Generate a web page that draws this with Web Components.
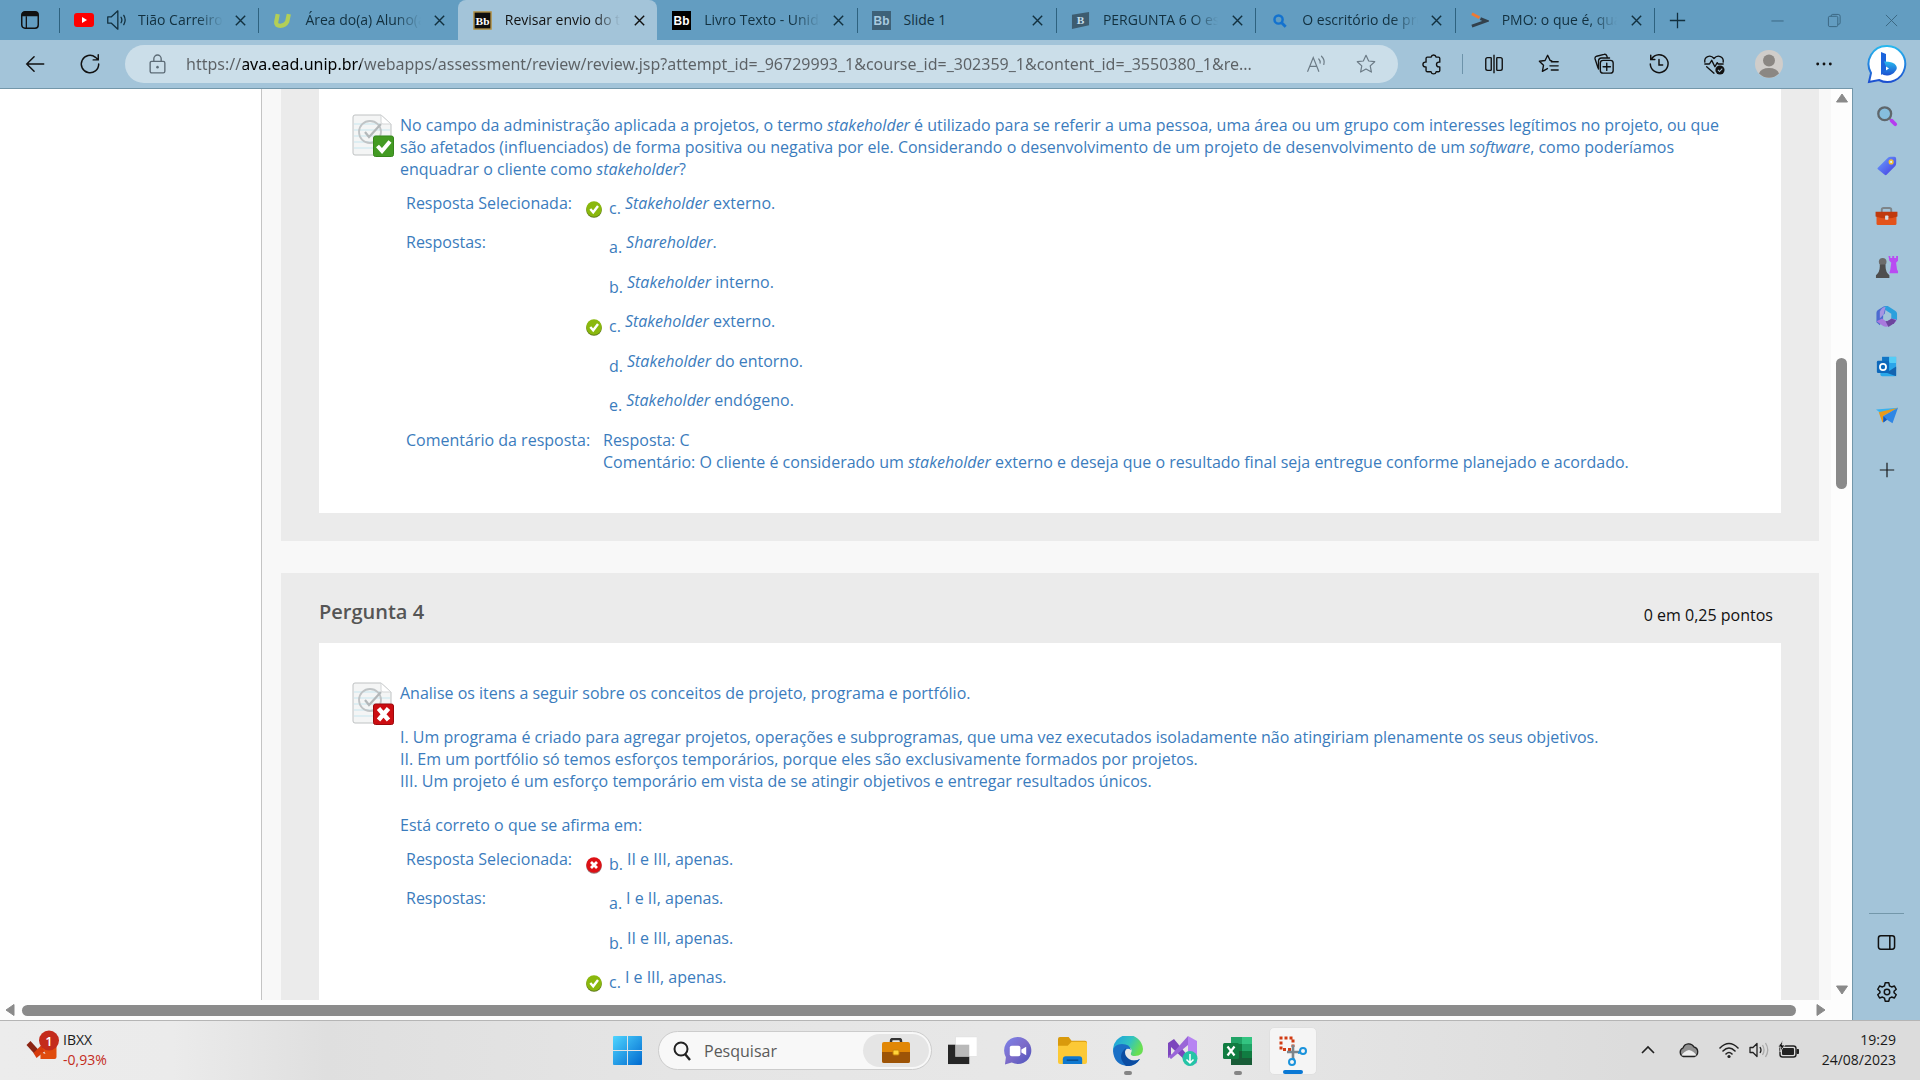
<!DOCTYPE html>
<html lang="pt-BR">
<head>
<meta charset="utf-8">
<title>Revisar envio do teste</title>
<style>
html,body{margin:0;height:100%}
body{font-family:"Open Sans","Noto Sans",sans-serif;font-size:14px;color:#1a1a1a;overflow:hidden}
</style>
</head>
<body>
<desk-top></desk-top>
<script>
const ICONS = {
workspace:['24 24','<rect x="3" y="3" width="18" height="18" rx="3.5" fill="none" stroke="#111" stroke-width="1.6"/><path d="M3 8V6a3 3 0 0 1 3-3h12a3 3 0 0 1 3 3v2z" fill="#111"/><path d="M8 8v13" stroke="#111" stroke-width="1.4"/>'],
youtube:['20 14','<rect width="20" height="14" rx="3" fill="#f00"/><path d="M8 4v6l5-3z" fill="#fff"/>'],
sound:['24 24','<g fill="none" stroke="#12303f" stroke-width="1.4" stroke-linejoin="round" stroke-linecap="round"><path d="M3 8.500h4l7-6.500v20l-7-6.500H3z"/><path d="M17.500 9q1.800 3 0 6M20.500 7q3 5 0 10"/></g>'],
unip:['18 16','<path d="M4.500 2L3 9.500Q2.500 13 7 13T13.500 9L15 2" fill="none" stroke="#b3cf57" stroke-width="4"/>'],
bbgold:['20 20','<rect x="1" y="1" width="18" height="18" fill="#0d0d0d" stroke="#b39246" stroke-width="1.500"/><text x="10" y="14.500" text-anchor="middle" font-family="Liberation Serif" font-weight="700" font-size="12" fill="#fff">Bb</text>'],
bb:['20 20','<rect width="20" height="20" fill="#000"/><text x="10" y="14.500" text-anchor="middle" font-family="Liberation Sans" font-weight="700" font-size="12.500" fill="#fff">Bb</text>'],
bbgray:['20 20','<rect width="20" height="20" fill="#3e6178"/><text x="10" y="14.500" text-anchor="middle" font-family="Liberation Sans" font-weight="700" font-size="12.500" fill="#a9cbe0">Bb</text>'],
brainly:['20 20','<path d="M1 4L19 1V15L1 19z" fill="#3d5c70"/><text x="10" y="14" text-anchor="middle" font-family="Liberation Serif" font-weight="700" font-size="12" fill="#c4deec">B</text>'],
magblue:['20 20','<circle cx="9" cy="9" r="4.300" fill="none" stroke="#1372cf" stroke-width="2.600"/><path d="M12 12l4.500 4.500" stroke="#1372cf" stroke-width="3"/>'],
pmo:['20 20','<path d="M2 3l8 4" stroke="#f07a32" stroke-width="3"/><path d="M11 8l6 2.500L2 16" fill="none" stroke="#33414c" stroke-width="3"/>'],
close:['16 16','<path d="M3 3l10 10M13 3L3 13" stroke="currentColor" stroke-width="1.500"/>'],
thinx:['16 16','<path d="M2 2l12 12M14 2L2 14" stroke="#3a6580" stroke-width="1"/>'],
plus:['20 20','<path d="M10 1v18M1 10h18" stroke="currentColor" stroke-width="1.500"/>'],
min:['16 16','<path d="M1.500 8.500h13" stroke="#3a6580"/>'],
max:['16 16','<g fill="none" stroke="#3a6580"><rect x="1.500" y="3.500" width="10" height="11" rx="1.500"/><path d="M4.500 3.500v-.5a1.500 1.500 0 0 1 1.500-1.500h6a2 2 0 0 1 2 2v7a1.500 1.500 0 0 1-1.500 1.500h-1"/></g>'],
back:['24 24','<path d="M21.500 12H3M11 4l-8 8 8 8" fill="none" stroke="#111" stroke-width="1.600" stroke-linecap="round"/>'],
reload:['24 24','<path d="M21.500 12a9.500 9.500 0 1 1-3.500-7.300l2.500 2.300M21 2V7.500H15.500" fill="none" stroke="#111" stroke-width="1.600" stroke-linecap="round"/>'],
lock:['20 20','<g fill="none" stroke="#5d6c77" stroke-width="1.300"><rect x="3" y="7" width="14" height="11" rx="1.500"/><path d="M6.500 7V4.500a3.500 3.500 0 0 1 7 0V7"/></g><circle cx="10" cy="12.500" r="1.200" fill="#5d6c77"/>'],
read:['24 24','<g fill="none" stroke="#6c7b86" stroke-width="1.300" stroke-linecap="round"><path d="M3 20L9 5l6 15M5.500 14.500h7M15 6.500q2 2 1.500 4.500M18 3.500q4 4 2.500 9"/></g>'],
star:['24 24','<path d="M12 2.500l2.900 6.200 6.600.8-4.900 4.600 1.300 6.700L12 17.500l-5.900 3.300 1.300-6.700L2.500 9.500l6.600-.8z" fill="none" stroke="#6c7b86" stroke-width="1.300" stroke-linejoin="round"/>'],
puzzle:['24 24','<path d="M7 4.500h4a2.800 2.800 0 0 1 5.500 0H19a1.500 1.500 0 0 1 1.500 1.500v4h-1a2.600 2.600 0 0 0 0 5.200h1V19a1.500 1.500 0 0 1-1.500 1.500h-2.500a2.800 2.800 0 0 1-5.500 0H7A1.500 1.500 0 0 1 5.500 19v-3.800h-.8a2.600 2.600 0 0 1 0-5.200h.8V6A1.500 1.500 0 0 1 7 4.500z" fill="none" stroke="#111" stroke-width="1.500" stroke-linejoin="round"/>'],
split:['24 24','<g fill="none" stroke="#111" stroke-width="1.500"><path d="M9 5H5a2 2 0 0 0-2 2v10a2 2 0 0 0 2 2h4M15 5h4a2 2 0 0 1 2 2v10a2 2 0 0 1-2 2h-4M12 2v20M9 5v14M15 5v14"/></g>'],
favs:['24 24','<g fill="none" stroke="#111" stroke-width="1.500" stroke-linejoin="round" stroke-linecap="round"><path d="M15 8.500L13.200 8 10.500 2.500 7.700 8.200 1.500 9l4.500 4.400L4.800 20l5.500-3"/><path d="M14.500 9.500H22M13 14h9M14.500 18.500H22"/></g>'],
collect:['24 24','<g fill="none" stroke="#111" stroke-width="1.500" stroke-linecap="round"><rect x="8" y="8" width="14" height="14" rx="3"/><path d="M15 11v8M11 15h8M5.500 16.500L2.300 6.500a2.500 2.500 0 0 1 1.700-3l8-2a2.500 2.500 0 0 1 3 1.500l.5 1.500M6 17.500V9a3.500 3.500 0 0 1 3.500-3.500H18"/></g>'],
history:['24 24','<g fill="none" stroke="#111" stroke-width="1.600" stroke-linecap="round"><path d="M4 6.500A9.700 9.700 0 1 1 2.500 12M3 2.500V7h4.500M12 7v6h4"/></g>'],
heart:['24 24','<g fill="none" stroke="#111" stroke-width="1.500" stroke-linejoin="round" stroke-linecap="round"><path d="M2 10C1 4 8 1 12 6c4-5 11-2 10 4M2 12h5l2.500-4 3.500 7 2.500-4.500 1 1.500H22M4 15l8 7"/></g><circle cx="18.500" cy="18.500" r="5" fill="#111"/><path d="M16.300 18.500l1.700 1.700 3-3.200" fill="none" stroke="#a3c4d9" stroke-width="1.200"/>'],
avatar:['28 28','<circle cx="14" cy="14" r="14" fill="#d0cdca"/><circle cx="14" cy="10.500" r="6" fill="#8b8783"/><path d="M4 23.500Q6 18 14 18t10 5.500A14 14 0 0 1 4 23.500z" fill="#8b8783"/>'],
dots:['20 20','<g fill="#111"><circle cx="3" cy="10" r="1.600"/><circle cx="10" cy="10" r="1.600"/><circle cx="17" cy="10" r="1.600"/></g>'],
bing:['40 40','<defs><linearGradient id="a" x1="0" y1="0" x2="0" y2="1"><stop stop-color="#28b8ee"/><stop offset="1" stop-color="#1c4fd0"/></linearGradient></defs><path d="M20 2A18 18 0 1 1 12 36L2 38 4 29A18 18 0 0 1 20 2z" fill="#fff" stroke="url(#a)" stroke-width="2"/><path d="M14 8l5 2v17l-5 4z" fill="#1c64dc"/><path d="M14 29.500l8-5-3-2-2-5q10 0 12 4 2 3-1 6-2 3-7 4-4 .5-7-2z" fill="url(#a)"/>'],
search3d:['24 24','<path d="M15 15l3 3" stroke="#777" stroke-width="2"/><path d="M17 17l4 4" stroke="#b53cf0" stroke-width="4" stroke-linecap="round"/><circle cx="9.500" cy="9.500" r="7" fill="#86bede" stroke="#5f676c" stroke-width="2.500"/>'],
tag:['24 24','<defs><linearGradient id="a" x2="1" y2="1"><stop stop-color="#6ba4ff"/><stop offset="1" stop-color="#4437e0"/></linearGradient></defs><path d="M2 14L13 3q1-1 3-1h4q2 0 2 2v5q0 2-1 3L11.500 21.500q-1 1-2 0L2 15.500q-1-.5 0-1.500z" fill="url(#a)"/><circle cx="16.500" cy="7.500" r="2" fill="#dcecff" stroke="#f4c02b" stroke-width="1.600"/>'],
case:['24 20','<path d="M7 6V3q0-2 2-2h6q2 0 2 2v3" fill="none" stroke="#7e8589" stroke-width="2"/><rect x="1.500" y="6" width="21" height="13" rx="1.500" fill="#e3531b"/><path d="M.5 5h23v5q-11 4-23 0z" fill="#c03a0d"/><rect x="10.500" y="9" width="3.500" height="4.500" rx=".8" fill="#d8dde0"/>'],
chess:['24 24','<path d="M14 1h2v2h2V1h2v2h2V1h2v5l-2 2 1 7 1 2v2h-9l1-4 1-7-2-2z" fill="#b94bf2"/><circle cx="8" cy="7" r="4" fill="#6c6c6c"/><path d="M5 10h6v2q0 6 4 9v3H1v-3q4-3 4-9z" fill="#4e4e4e"/>'],
m365:['24 24','<path d="M9 1.500L14 1l-3 4-2 9-4 7L1.500 18V8q0-2 2-3z" fill="#4c6bd0"/><path d="M9 2q3-2 6 0l6 4q2 1 2 3v7l-6-2V9l-5-3z" fill="#2ba0dd"/><path d="M1.500 17l6-3 4 3 5-3 6 1q0 2-2 3.500l-6 3.500q-3 1.500-6 0z" fill="#a879dd"/><path d="M11 17l6-3 5 2-2 3-6 4z" fill="#6d459e"/><path d="M5 7q2-5 6-5l-2 8-4 4z" fill="#a595e2"/><path d="M12.500 8l4 2.500v4L12.500 17l-4-2.500v-4z" fill="#a3c4d9"/>'],
outlook:['24 24','<rect x="7" y="1" width="16" height="14" fill="#2aa5ea"/><path d="M7 1h8v7H7z" fill="#1275c5"/><path d="M15 1h8v7h-8z" fill="#53cdf7"/><path d="M5 12l18 1v8q0 2-2 2H7q-2 0-2-2z" fill="#28a8ea"/><path d="M23 12L12 19l11 4z" fill="#1464b0"/><rect x="1" y="5.500" width="14" height="14" rx="1.500" fill="#0d68bb"/><circle cx="8" cy="12.500" r="3.500" fill="none" stroke="#fff" stroke-width="2"/>'],
plane:['24 24','<path d="M0 5l24-2-16 8z" fill="#37b2f0"/><path d="M3 8L24 3 8 12v6l-1 1z" fill="#e79a1b"/><path d="M8 12L24 3l-6 17-6-4-4 3z" fill="#2f86e4"/><path d="M8 12l4 4-4 3z" fill="#1759b8"/>'],
panel:['20 20','<g fill="none" stroke="#111" stroke-width="1.600"><rect x="1.500" y="3" width="17" height="14" rx="2.500"/><path d="M13.500 3v14"/></g>'],
gear:['24 24','<g fill="none" stroke="#111" stroke-width="1.600" stroke-linejoin="round"><path d="M10 2h4l.7 3.200 2.300 1.300 3.100-1 2 3.500-2.400 2.200v1.600l2.400 2.200-2 3.500-3.100-1-2.300 1.300L14 22h-4l-.7-3.200L7 17.500l-3.100 1-2-3.500 2.400-2.200v-1.600L1.900 9l2-3.500 3.100 1 2.300-1.300z"/><circle cx="12" cy="12" r="3"/></g>'],
docok:['42 44','<path d="M1 3q0-2 2-2h26l10 9v29q0 2-2 2H3q-2 0-2-2z" fill="#f4f5f5" stroke="#bfc2c3"/><path d="M29 1l10 9h-8q-2 0-2-2z" fill="#fff" stroke="#d3d5d6"/><path d="M2 10h26M2 16h36M2 22h36M2 28h36M2 34h36" stroke="#c7e6ef"/><circle cx="18" cy="18" r="11" fill="none" stroke="#c0c4c6" stroke-width="1.800"/><path d="M13 18l4 5 12-13" fill="none" stroke="#b3b8ba" stroke-width="2.200"/><rect x="21.500" y="22" width="20" height="20.500" rx="2" fill="#439b23" stroke="#36861b"/><path d="M25.500 32l4.500 5 8-9.500" fill="none" stroke="#fff" stroke-width="4"/>'],
docno:['42 44','<path d="M1 3q0-2 2-2h26l10 9v29q0 2-2 2H3q-2 0-2-2z" fill="#f4f5f5" stroke="#bfc2c3"/><path d="M29 1l10 9h-8q-2 0-2-2z" fill="#fff" stroke="#d3d5d6"/><path d="M2 10h26M2 16h36M2 22h36M2 28h36M2 34h36" stroke="#c7e6ef"/><circle cx="18" cy="18" r="11" fill="none" stroke="#c0c4c6" stroke-width="1.800"/><path d="M13 18l4 5 12-13" fill="none" stroke="#b3b8ba" stroke-width="2.200"/><rect x="21.500" y="22" width="20" height="20.500" rx="2" fill="#cc0d12" stroke="#9d080c"/><path d="M26.500 26.500l10 11.500M36.500 26.500L26.500 38" stroke="#fff" stroke-width="4.500"/>'],
ok:['16 17','<circle cx="8" cy="9" r="7.800" fill="#5f7a1c"/><circle cx="8" cy="8" r="7.700" fill="#8ab80d"/><path d="M4.300 8l2.900 3.300L12 5" fill="none" stroke="#fff" stroke-width="2.400"/>'],
no:['16 17','<circle cx="8" cy="9" r="7.800" fill="#96797a"/><circle cx="8" cy="8" r="7.700" fill="#dd1015"/><path d="M5 5l6 6M11 5l-6 6" stroke="#fff" stroke-width="2.800"/>'],
stock:['34 32','<path d="M1 15l4-4 9 10-4 4z" fill="#8c2413"/><path d="M8 23l9-9 5 5-11 9z" fill="#d63b0c"/><path d="M15 29V22l5 2-3-6 14-2v11q0 2-2 2z" fill="#e04c0d"/><circle cx="23.500" cy="10.500" r="10" fill="#c42b1c"/><text x="23.500" y="15.500" text-anchor="middle" font-family="Open Sans" font-weight="600" font-size="13" fill="#fff">1</text>'],
windows:['30 30','<defs><linearGradient id="a" x2="1" y2="1"><stop stop-color="#4fd5ff"/><stop offset="1" stop-color="#0069cf"/></linearGradient></defs><path d="M0 1q0-1 1-1h13.500v14.500H0zM15.500 0H29q1 0 1 1v13.500H15.500zM0 15.500h14.500V30H1q-1 0-1-1zM15.500 15.500H30V29q0 1-1 1H15.500z" fill="url(#a)"/>'],
mag:['20 20','<circle cx="9" cy="8" r="6.500" fill="none" stroke="#222" stroke-width="2"/><path d="M13 13l5 6" stroke="#222" stroke-width="2.400"/>'],
goldcase:['30 26','<path d="M10 5V3q0-2 2-2h6q2 0 2 2v2" fill="none" stroke="#333" stroke-width="2.500"/><rect x="1" y="4" width="28" height="21" rx="2" fill="#e18706"/><path d="M1 14h28v9q0 2-2 2H3q-2 0-2-2z" fill="#9d5407"/><rect x="12" y="12" width="6" height="5" rx="1" fill="#ffd43a" stroke="#c98309"/>'],
taskview:['30 30','<rect x="0" y="9" width="22" height="20" fill="#262626"/><rect x="8" y="1" width="22" height="20" fill="#fff" stroke="#ddd" stroke-width=".5"/><path d="M8 9h14v12H8z" fill="#b9b9b9"/>'],
chat:['30 30','<defs><linearGradient id="a" x2="1" y2="1"><stop stop-color="#7b83eb"/><stop offset=".5" stop-color="#7d6cc9"/><stop offset="1" stop-color="#4b53bc"/></linearGradient></defs><path d="M15 1a14 14 0 1 1-6 26.500L2 29.500 3 22A14 14 0 0 1 15 1z" fill="url(#a)"/><rect x="7" y="10" width="11" height="11" rx="2" fill="#fff"/><path d="M19 14l5-3v9l-5-3z" fill="#fff"/>'],
folder:['32 30','<path d="M1 3q0-2 2-2h9l3 4h14q2 0 2 2v8H1z" fill="#d99a0c"/><path d="M1 10h10l4-4h14q2 0 2 2v19q0 2-2 2H3q-2 0-2-2z" fill="#fcc936"/><path d="M6 29v-5q0-3 3-3h14q3 0 3 3v5z" fill="#0f78cf"/><path d="M10 25h12" stroke="#0a4c8c" stroke-width="1.500"/>'],
edge:['30 30','<defs><linearGradient id="a" x2="1" y2=".4"><stop stop-color="#1b9de2"/><stop offset=".6" stop-color="#32c3c0"/><stop offset="1" stop-color="#69df52"/></linearGradient></defs><path d="M0 15A15 15 0 0 1 30 13q0 7-8 7-5 0-4-3 2-4-2-6-7-3-16 4z" fill="url(#a)"/><path d="M0 15Q1 8 9 8q8 0 9 6-4-3-6 1-2 5 4 9 6 2 11-1Q23 30 15 30 1 29 0 15z" fill="#1b70c6"/><path d="M13 12Q3 20 13 30 21 31 27 23q-6 3-11 0-6-4-3-11z" fill="#0c4da2"/>'],
vs:['30 30','<path d="M0 7l6-4 14 17v7L3 11v9L0 22z" fill="#7c46bd"/><path d="M0 20l3 3L20 9V0L4 18z" fill="#9a66d8"/><path d="M20 0l9 5v22l-9 3z" fill="#b783f2"/><circle cx="22" cy="22.500" r="7.500" fill="#25c4a6"/><path d="M22 18v9M18.500 23.500L22 27l3.500-3.500" fill="none" stroke="#fff" stroke-width="1.500"/>'],
excel:['30 30','<path d="M8 1h21v28H8z" fill="#21a366"/><path d="M19 1h10v7H19z" fill="#33c481"/><path d="M8 8h11v7H8zM19 15h10v7H19z" fill="#107c41"/><path d="M8 15h11v14H8zM19 22h10v7H19z" fill="#185c37"/><rect y="7" width="16" height="16" rx="1.500" fill="#107c41"/><path d="M4.500 10.500l7 9M11.500 10.500l-7 9" stroke="#fff" stroke-width="2.200"/>'],
snip:['28 30','<path d="M12 13.500H2V2h12v9" fill="none" stroke="#d13b12" stroke-width="3" stroke-dasharray="3 2"/><path d="M14 9v13M8 16h13" stroke="#7c858c" stroke-width="2.600"/><g fill="none" stroke="#1a93dc" stroke-width="2"><circle cx="24" cy="15" r="3"/><circle cx="13" cy="26" r="3"/><path d="M19 17l3-1M15 22l-1 2"/></g>'],
up:['16 16','<path d="M2 11l6-6 6 6" fill="none" stroke="#222" stroke-width="1.600"/>'],
cloud:['22 16','<path d="M5.500 14.500a4.500 4.500 0 0 1-.5-8.500 6 6 0 0 1 11-1 5 5 0 0 1 .5 9.500z" fill="#909090" stroke="#222" stroke-width="1.300"/><path d="M3.500 13.500Q6 9 11 8q5 1 7.500 5.500z" fill="#eee"/>'],
wifi:['22 18','<g fill="none" stroke="#222" stroke-width="1.600" stroke-linecap="round"><path d="M2 7q9-9 18 0M5 10q6-6 12 0M8 13q3-3 6 0"/></g><circle cx="11" cy="15.500" r="1.600" fill="#222"/>'],
vol:['22 18','<g fill="none" stroke="#222" stroke-width="1.300" stroke-linejoin="round"><path d="M2 6.500h3l4-4v13l-4-4H2z"/><path d="M12 6q2 3 0 6"/><path d="M14.500 4q3 5 0 10M17.500 2q4.500 7 0 14" stroke="#aaa"/></g>'],
battery:['22 20','<rect x="2" y="6" width="16" height="11" rx="2.500" fill="none" stroke="#222" stroke-width="1.400"/><rect x="4" y="8" width="12" height="7" rx="1" fill="#222"/><path d="M19 9.500h1.500v4H19z" fill="#222" stroke="#222"/><path d="M5 0L0 7h3l-1 5 5-7H4z" fill="#111" stroke="#ddd" stroke-width=".8"/>'],
tri:['12 12','<path d="M6 2l5.500 8H.5z" fill="#8a8a8a" stroke="#8a8a8a" stroke-linejoin="round"/>']
};
const define = (name, css, html) => customElements.define(name, class extends HTMLElement {
  connectedCallback(){
    if(this.shadowRoot) return;
    const root = this.attachShadow({mode:'open'});
    const body = typeof html === 'function' ? html(this) : html;
    root.innerHTML = `<style>*{box-sizing:border-box}button{font:inherit;color:inherit;background:none;border:0;padding:0;display:flex;align-items:center;justify-content:center}:host{display:block;box-sizing:border-box}${css}</style>${body}`;
  }
});
const attr = (e,n) => e.getAttribute(n) || '';
const ico = (n,w,h=w) => `<ui-icon name="${n}" w="${w}" h="${h}"></ui-icon>`;
const btn = (n,label,w,h=w) => `<button aria-label="${label}">${ico(n,w,h)}</button>`;

define('ui-icon', ':host{flex:none}svg{display:block}', e => {
  const [vb, art] = ICONS[attr(e,'name')];
  return `<svg aria-hidden="true" width="${attr(e,'w')}" height="${attr(e,'h')}" viewBox="0 0 ${vb}">${art}</svg>`;
});

define('browser-tab', `
:host{flex:1;min-width:0;height:40px;display:flex;align-items:center;padding:0 9px 0 15px;gap:13px;color:#12303f;position:relative}
:host([sound]){gap:11px}
:host([line])::before{content:"";position:absolute;left:0;top:8px;width:1px;height:25px;background:#2e627f}
:host([active]){background:#a3c4d9;border-radius:8px 8px 0 0;color:#111}
span{flex:1;min-width:0;overflow:hidden;white-space:nowrap;font-size:14px;line-height:20px;-webkit-mask-image:linear-gradient(90deg,#000 calc(100% - 26px),transparent)}
:host([short]) span{-webkit-mask-image:none}
button{width:18px;height:24px;margin-left:-3px}
`, e => `${ico(attr(e,'icon'), attr(e,'icon')==='youtube'?20:19, attr(e,'icon')==='youtube'?14:19)}${e.hasAttribute('sound')?ico('sound',22):''}<span><slot></slot></span>${btn('close','Fechar guia',15)}`);

define('tab-strip', `
:host{display:flex;height:40px;background:#639dc1}
.lead{width:59px;height:40px}
nav{flex:1;display:flex;min-width:0}
.end{width:266px;display:flex;color:#12303f;position:relative}
.end::before{content:"";position:absolute;left:0;top:8px;width:1px;height:25px;background:#2e627f}
.new{width:46px}.gap{flex:1}.win{width:57px}
`, `<button class="lead" aria-label="Espaços de trabalho">${ico('workspace',22)}</button>
<nav>
<browser-tab icon="youtube" sound line>Tião Carreiro e Pardinho</browser-tab>
<browser-tab icon="unip" line>Área do(a) Aluno(a)</browser-tab>
<browser-tab icon="bbgold" active>Revisar envio do teste</browser-tab>
<browser-tab icon="bb">Livro Texto - Unidade</browser-tab>
<browser-tab icon="bbgray" line short>Slide 1</browser-tab>
<browser-tab icon="brainly" line>PERGUNTA 6 O escritório</browser-tab>
<browser-tab icon="magblue" line>O escritório de projetos</browser-tab>
<browser-tab icon="pmo" line>PMO: o que é, quais são</browser-tab>
</nav>
<div class="end"><button class="new" aria-label="Nova guia">${ico('plus',17)}</button><div class="gap"></div>
<button class="win" aria-label="Minimizar">${ico('min',15)}</button><button class="win" aria-label="Restaurar">${ico('max',15)}</button><button class="win" aria-label="Fechar">${ico('thinx',15)}</button></div>`);

define('tool-bar', `
:host{display:flex;align-items:center;height:48px;background:#a3c4d9;padding:0 13px 0 7px}
.nav{width:55px;height:38px}
.addr{flex:1;min-width:0;height:38px;margin:0 6px 0 8px;border-radius:19px;background:#cbdee9;display:flex;align-items:center;padding:0 7px 0 22px}
input{flex:1;min-width:0;border:0;outline:0;margin-left:18px;padding:0;height:30px;font:16px "Noto Sans","Open Sans",sans-serif;color:#5c6165;background:linear-gradient(90deg,#5c6165 57px,#000 57px 175px,#5c6165 175px);-webkit-background-clip:text;background-clip:text;-webkit-text-fill-color:transparent}
.in{width:50px;height:30px}
.t{width:55px;height:38px}
.sep{width:1px;height:20px;background:#6d93aa;margin:0 3px}
.bing{width:56px;height:42px;justify-content:flex-end}
`, `<button class="nav" aria-label="Voltar">${ico('back',22)}</button><button class="nav" aria-label="Atualizar">${ico('reload',22)}</button>
<div class="addr">${ico('lock',21)}<input aria-label="Endereço" value="https://ava.ead.unip.br/webapps/assessment/review/review.jsp?attempt_id=_96729993_1&amp;course_id=_302359_1&amp;content_id=_3550380_1&amp;re..."><button class="in" aria-label="Ler em voz alta">${ico('read',22)}</button><button class="in" aria-label="Favoritar">${ico('star',22)}</button></div>
<button class="t" aria-label="Extensões">${ico('puzzle',22)}</button><div class="sep"></div>
<button class="t" aria-label="Dividir tela">${ico('split',22)}</button><button class="t" aria-label="Favoritos">${ico('favs',22)}</button><button class="t" aria-label="Coleções">${ico('collect',22)}</button><button class="t" aria-label="Histórico">${ico('history',22)}</button><button class="t" aria-label="Fundamentos">${ico('heart',22)}</button><button class="t" aria-label="Perfil">${ico('avatar',28)}</button><button class="t" aria-label="Mais">${ico('dots',18)}</button><button class="bing" aria-label="Bing">${ico('bing',40)}</button>`);

define('side-bar', `
:host{width:68px;background:#a3c4d9;display:flex;flex-direction:column;align-items:center;border-left:1px solid #7397aa;padding:3px 0}
button{width:50px;height:50px}
.add{margin-top:4px}
hr{width:35px;height:1px;border:0;background:#7397aa;margin:auto 0 3px}
`, `${btn('search3d','Pesquisar',22)}${btn('tag','Compras',22)}${btn('case','Ferramentas',23,19)}${btn('chess','Jogos',23)}${btn('m365','Microsoft 365',23)}${btn('outlook','Outlook',21)}${btn('plane','Soltar',22)}<button class="add" aria-label="Adicionar">${ico('plus',16)}</button><hr>${btn('panel','Ocultar barra lateral',19)}${btn('gear','Configurações',22)}`);

define('scroll-bar', `
:host{display:flex;align-items:center;background:#fdfdfd;padding:4px}
:host([dir=v]){flex-direction:column;width:21px;padding:3px 5px 4px}
:host([dir=h]){height:20px;padding:0 25px 0 4px}
i{display:block;background:#8a8a8a;border-radius:6px}
:host([dir=v]) i{width:11px;height:131px}
:host([dir=h]) i{height:11px;flex:1;margin:0 19px 0 6px}
.before{flex:253}.after{flex:494}
.l{transform:rotate(-90deg)}.r{transform:rotate(90deg)}.d{transform:rotate(180deg)}
`, e => attr(e,'dir')==='v'
 ? `${ico('tri',12)}<div class="before"></div><i></i><div class="after"></div><div class="d">${ico('tri',12)}</div>`
 : `<div class="l">${ico('tri',12)}</div><i></i><div class="r">${ico('tri',12)}</div>`);

define('quiz-answer', `
:host{display:flex;line-height:22px}
.mark{width:16px;padding-top:9px;flex:none}
.letter{padding-top:5px;margin:0 4px 0 7px}
`, e => `<div class="mark">${attr(e,'mark')?ico(attr(e,'mark'),16,17):''}</div><span class="letter">${attr(e,'letter')}.</span><span><slot></slot></span>`);

define('quiz-row', `
:host{display:flex;line-height:22px}
.label{width:180px;flex:none;white-space:nowrap}
::slotted(p){margin:0 0 0 17px}
`, e => `<span class="label">${attr(e,'label')}</span><slot></slot>`);

define('quiz-question', `
:host{background:#ebebeb;padding:0 38px 28px;font-size:16px;line-height:22px;color:#3b7cbd}
header{height:70px;display:flex;justify-content:space-between;align-items:center;padding:8px 8px 0 0;color:#111}
h3{margin:0;font-size:20px;line-height:26px;font-weight:600;color:#555}
header span{padding-top:6px}
.body{background:#fff;padding:39px 33px 40px;display:flex;gap:6px;align-items:flex-start}
:host([cut]) .body{padding-top:25px}
:host([grow]){flex:1;padding-bottom:0}
:host([grow]) .body{padding-bottom:600px}
.text{flex:1;min-width:0}
.rows{padding:12px 0 0 6px}
::slotted(quiz-row:nth-of-type(odd)){min-height:39px}
::slotted(quiz-row:nth-of-type(even)){min-height:40px}
`, e => `${attr(e,'heading')?`<header><h3>${attr(e,'heading')}</h3><span>${attr(e,'points')}</span></header>`:''}
<div class="body">${ico(attr(e,'status'),42,44)}<div class="text"><slot name="prompt"></slot><div class="rows"><slot></slot></div></div></div>`);

define('review-page', `
:host{flex:1;min-width:0;min-height:0;overflow:hidden;background:#fff;padding-left:261px;display:flex}
main{flex:1;min-width:0;border-left:1px solid #c4c4c4;background:#f8f8f8;padding:0 12px 0 19px;display:flex;flex-direction:column;gap:32px}
`, `<main>
<quiz-question cut status="docok">
<div slot="prompt">No campo da administração aplicada a projetos, o termo <em>stakeholder</em> é utilizado para se referir a uma pessoa, uma área ou um grupo com interesses legítimos no projeto, ou que são afetados (influenciados) de forma positiva ou negativa por ele. Considerando o desenvolvimento de um projeto de desenvolvimento de um <em>software</em>, como poderíamos enquadrar o cliente como <em>stakeholder</em>?</div>
<quiz-row label="Resposta Selecionada:"><quiz-answer letter="c" mark="ok"><em>Stakeholder</em> externo.</quiz-answer></quiz-row>
<quiz-row label="Respostas:"><quiz-answer letter="a"><em>Shareholder</em>.</quiz-answer></quiz-row>
<quiz-row><quiz-answer letter="b"><em>Stakeholder</em> interno.</quiz-answer></quiz-row>
<quiz-row><quiz-answer letter="c" mark="ok"><em>Stakeholder</em> externo.</quiz-answer></quiz-row>
<quiz-row><quiz-answer letter="d"><em>Stakeholder</em> do entorno.</quiz-answer></quiz-row>
<quiz-row><quiz-answer letter="e"><em>Stakeholder</em> endógeno.</quiz-answer></quiz-row>
<quiz-row label="Comentário da resposta:"><p>Resposta: C<br>Comentário: O cliente é considerado um <em>stakeholder</em> externo e deseja que o resultado final seja entregue conforme planejado e acordado.</p></quiz-row>
</quiz-question>
<quiz-question grow status="docno" heading="Pergunta 4" points="0 em 0,25 pontos">
<div slot="prompt">Analise os itens a seguir sobre os conceitos de projeto, programa e portfólio.<br><br>I. Um programa é criado para agregar projetos, operações e subprogramas, que uma vez executados isoladamente não atingiriam plenamente os seus objetivos.<br>II. Em um portfólio só temos esforços temporários, porque eles são exclusivamente formados por projetos.<br>III. Um projeto é um esforço temporário em vista de se atingir objetivos e entregar resultados únicos.<br><br>Está correto o que se afirma em:</div>
<quiz-row label="Resposta Selecionada:"><quiz-answer letter="b" mark="no">II e III, apenas.</quiz-answer></quiz-row>
<quiz-row label="Respostas:"><quiz-answer letter="a">I e II, apenas.</quiz-answer></quiz-row>
<quiz-row><quiz-answer letter="b">II e III, apenas.</quiz-answer></quiz-row>
<quiz-row><quiz-answer letter="c" mark="ok">I e III, apenas.</quiz-answer></quiz-row>
</quiz-question>
</main>`);

define('task-bar', `
:host{height:60px;display:grid;grid-template-columns:1fr auto 1fr;align-items:center;border-top:1px solid #b5b5b5;background:linear-gradient(90deg,#ececec,#ebebeb 9%,#dfdfdf 17%,#e5e5e5 35%,#e8e8e8 60%,#dcdcdc 85%,#dcdcdc);font-size:14px;line-height:20px}
.stock{display:flex;gap:3px;padding:0 0 2px 25px;text-align:left;justify-self:start}
.stock b{font-weight:400;display:block;color:#c42b1c}
.stock ui-icon{align-self:flex-start}
.mid{display:flex;align-items:center;padding-right:6px}
.app{width:55px;height:48px;position:relative}
.app::after{content:"";position:absolute;bottom:0;width:0;height:4px;border-radius:2px;background:#858585}
.run::after{width:8px}
.sel{width:48px;margin-left:4px;background:#f5f5f5;border:1px solid #e0e0e0;border-radius:5px}
.sel::after{width:20px;background:#0a78d4}
.start{width:61px;height:48px}
label{display:flex;align-items:center;width:274px;height:39px;border:1px solid #ccc;border-radius:20px;background:#f8f8f8;padding:0 2px 0 13px;margin-right:3px}
input{flex:1;min-width:0;border:0;background:none;outline:0;font:16px "Open Sans",sans-serif;margin-left:12px;padding:0}
input::placeholder{color:#5a5a5a;opacity:1}
.pill{width:66px;height:33px;border-radius:17px;background:#e5e5e5;display:flex;align-items:center;justify-content:center}
.tray{display:flex;align-items:center;justify-self:end;padding:0 24px 2px 0}
.tray ui-icon{margin-right:8px}
.tray .up{margin-right:22px}.tray .cl{margin-right:18px}
.clock{text-align:right;display:block;margin-left:14px}
`, `<button class="stock">${ico('stock',35,32)}<span>IBXX<b>-0,93%</b></span></button>
<div class="mid"><button class="start" aria-label="Iniciar">${ico('windows',29)}</button>
<label>${ico('mag',20)}<input type="search" aria-label="Pesquisar" placeholder="Pesquisar"><span class="pill">${ico('goldcase',30,26)}</span></label>
<button class="app" aria-label="Visão de tarefas">${ico('taskview',29)}</button><button class="app" aria-label="Chat">${ico('chat',29)}</button><button class="app" aria-label="Explorador">${ico('folder',31,29)}</button><button class="app run" aria-label="Edge">${ico('edge',30)}</button><button class="app" aria-label="Visual Studio">${ico('vs',30)}</button><button class="app run" aria-label="Excel">${ico('excel',30)}</button><button class="app sel" aria-label="Captura">${ico('snip',28,30)}</button></div>
<div class="tray"><ui-icon class="up" name="up" w="16" h="16"></ui-icon><ui-icon class="cl" name="cloud" w="22" h="16"></ui-icon>${ico('wifi',22,18)}${ico('vol',22,18)}${ico('battery',22,20)}<button class="clock">19:29<br>24/08/2023</button></div>`);

define('desk-top', `
:host{height:100vh;display:flex;flex-direction:column}
.mid{flex:1;min-height:0;display:flex}
.view{flex:1;min-width:0;display:flex;flex-direction:column;background:#fdfdfd;border-top:1px solid #7397aa}
.row{flex:1;min-height:0;display:flex}
.frame{flex:1;min-width:0;display:flex;flex-direction:column}
`, `<tab-strip></tab-strip><tool-bar></tool-bar>
<div class="mid"><div class="view"><div class="row"><div class="frame"><review-page></review-page></div><scroll-bar dir="v"></scroll-bar></div><scroll-bar dir="h"></scroll-bar></div><side-bar></side-bar></div>
<task-bar></task-bar>`);
</script>
</body>
</html>
